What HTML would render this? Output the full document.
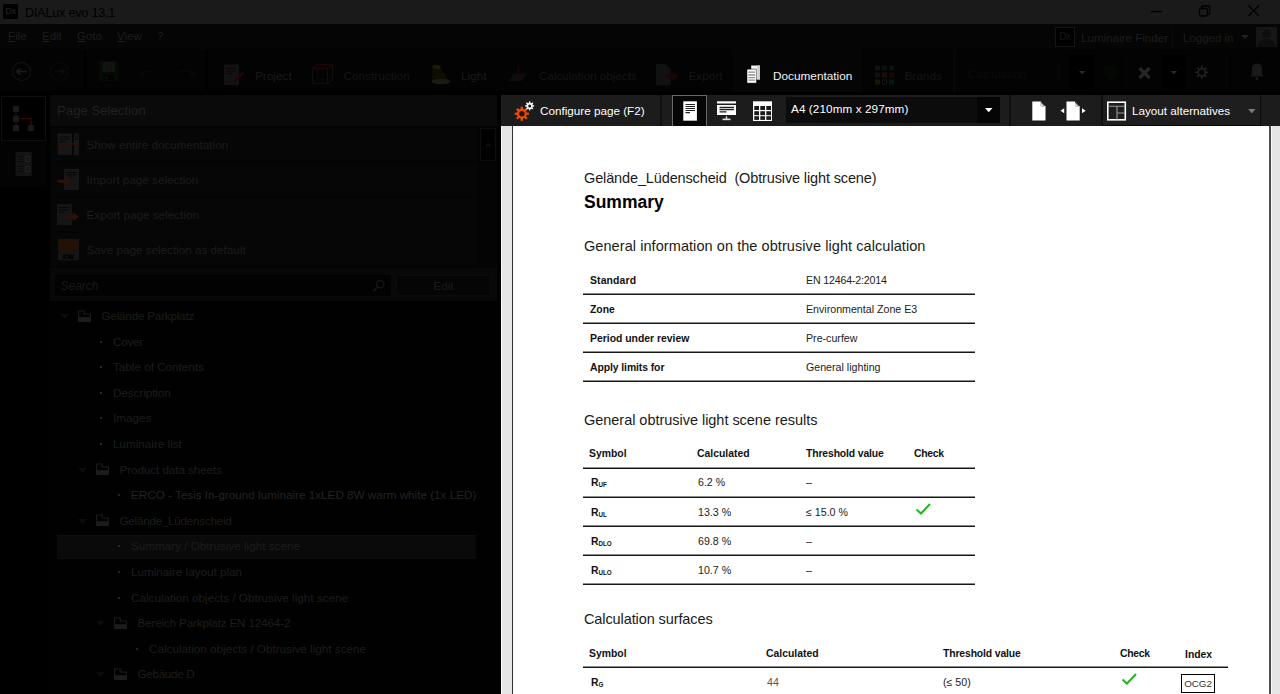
<!DOCTYPE html>
<html lang="en">
<head>
<meta charset="utf-8">
<title>DIALux evo 13.1</title>
<style>
*{box-sizing:border-box;margin:0;padding:0}
html,body{width:1280px;height:694px;overflow:hidden;background:#000}
body{position:relative;font-family:"Liberation Sans","DejaVu Sans",sans-serif;font-size:12px;color:#2b2b2b}
.abs{position:absolute}
.ui{font-family:"Liberation Sans",sans-serif}
/* title bar */
#titlebar{left:0;top:0;width:1280px;height:24px;background:#1a1a1a}
#appicon{left:3px;top:4px;width:15px;height:15px;background:#000;color:#272727;font-size:9px;line-height:15px;text-align:center;letter-spacing:-.3px}
#apptitle{left:25px;top:5px;font-size:12.6px;line-height:16px;color:#000;letter-spacing:-.2px}
/* menu */
#menubar{left:0;top:24px;width:1280px;height:25px;background:#050505}
.menu{top:29px;font-size:11.5px;line-height:15px;color:#1e1e1e}
.menu u{text-decoration:underline;text-underline-offset:1px}
/* toolbar */
#toolbar{left:0;top:49px;width:1280px;height:46px;background:#030303}
.tbl{top:69px;font-size:11.8px;line-height:15px;color:#272727}
/* left */
#left{left:0;top:95px;width:502px;height:599px;background:#000}
#panelhead{left:50px;top:95px;width:447px;height:31px;background:#0a0a0a}
#panelhead span{position:absolute;left:7px;top:7px;font-size:13.2px;line-height:17px;color:#212121}
.act{left:52px;width:425.500px;height:33px;background:#060606;margin-top:2px}
.act span{position:absolute;left:34.500px;top:9px;font-size:11.7px;line-height:15px;color:#1c1c1c;white-space:nowrap}
.tree{font-size:11.7px;line-height:15px;color:#1d1d1d;white-space:nowrap}
/* right toolbar */
#rtool{left:501px;top:95px;width:779px;height:31px;background:#1c1c1c}
.rt{color:#fff;font-size:11.7px;line-height:15px;white-space:nowrap}
/* doc */
#docbg{left:501px;top:126px;width:779px;height:568px;background:#e6e6e6}
#page{left:513px;top:126px;width:756px;height:568px;background:#fff}
.doc{font-family:"Liberation Sans",sans-serif;color:#111;white-space:nowrap}
.h1{font-size:17.5px;line-height:20px;font-weight:bold;color:#000}
.h2{font-size:14.5px;line-height:20px;color:#1a1a1a}
.th{font-size:10.4px;line-height:20px;font-weight:bold;color:#111}
.td{font-size:10.65px;line-height:20px;color:#222}
.th sub{font-size:6.3px;vertical-align:baseline;position:relative;top:1px;letter-spacing:-.1px}
.hr{height:2px;background:linear-gradient(#8c8c8c 0,#8c8c8c 50%,#161616 50%,#161616 100%);left:583px}
</style>
</head>
<body>
<div id="titlebar" class="abs"></div>
<div id="appicon" class="abs">Dx</div>
<div id="apptitle" class="abs ui">DIALux evo 13.1</div>

<div id="menubar" class="abs"></div>
<div class="abs menu ui" style="left:8px"><u>F</u>ile</div>
<div class="abs menu ui" style="left:42px"><u>E</u>dit</div>
<div class="abs menu ui" style="left:77px"><u>G</u>oto</div>
<div class="abs menu ui" style="left:117px"><u>V</u>iew</div>
<div class="abs menu ui" style="left:157px">?</div>

<div id="toolbar" class="abs"></div>


<!-- window controls -->
<svg class="abs" style="left:1140px;top:0" width="140" height="24" viewBox="0 0 140 24">
 <path d="M11 11.5h11" stroke="#000" stroke-width="1.3" fill="none"/>
 <rect x="59.5" y="8.5" width="8" height="7.5" rx="1.5" fill="none" stroke="#000" stroke-width="1.3"/>
 <path d="M61.5 8.5v-1.2a1.3 1.3 0 0 1 1.3-1.3h5.5a1.5 1.5 0 0 1 1.5 1.5v5.5a1.3 1.3 0 0 1-1.3 1.3h-1" fill="none" stroke="#000" stroke-width="1.3"/>
 <path d="M108.5 5.5l10.5 10.5M119 5.5l-10.5 10.5" stroke="#000" stroke-width="1.4" fill="none"/>
</svg>

<!-- menu right -->
<div class="abs" style="left:1055px;top:27px;width:20px;height:20px;background:#000;border:1px solid #151515;color:#161616;font-size:10px;line-height:17px;text-align:center;letter-spacing:-.4px">Dx</div>
<div class="abs menu ui" style="left:1081px;top:29.500px;font-size:11.6px;color:#1d1d1d">Luminaire Finder</div>
<div class="abs" style="left:1172px;top:26px;width:1px;height:22px;background:#0b0b0b"></div>
<div class="abs menu ui" style="left:1183px;top:30.500px;font-size:11.5px;color:#1d1d1d">Logged in</div>
<svg class="abs" style="left:1241px;top:35px" width="8" height="5" viewBox="0 0 8 5"><path d="M0 0h8L4 4.5z" fill="#1f1f1f"/></svg>
<svg class="abs" style="left:1256px;top:27px" width="21" height="20" viewBox="0 0 21 20"><rect width="21" height="20" fill="#161616"/><circle cx="10.5" cy="7" r="4.2" fill="#0e0e0e"/><path d="M2 20c0-5 3-8 8.500-8s8.500 3 8.500 8z" fill="#0e0e0e"/></svg>

<!-- main toolbar -->
<div class="abs" style="left:0;top:91px;width:1280px;height:4px;background:#000"></div>
<div class="abs" style="left:84px;top:49px;width:2px;height:42px;background:#000"></div>
<div class="abs" style="left:206px;top:49px;width:2px;height:42px;background:#000"></div>
<svg class="abs" style="left:0;top:49px" width="220" height="46" viewBox="0 0 220 46">
 <circle cx="21.500" cy="22.500" r="9" fill="none" stroke="#141414" stroke-width="1.2"/>
 <path d="M16.500 22.500h10M16.500 22.500l4-3.200M16.500 22.500l4 3.200" stroke="#1d1d1d" stroke-width="1.500" fill="none"/>
 <circle cx="59.500" cy="22.500" r="9" fill="none" stroke="#0a0a0a" stroke-width="1.2"/>
 <path d="M54.500 22.500h10M64.500 22.500l-4-3.200M64.500 22.500l-4 3.200" stroke="#0c0c0c" stroke-width="1.500" fill="none"/>
 <rect x="99" y="12" width="19.500" height="20" rx="1" fill="#030c03"/>
 <rect x="102.500" y="13" width="12.500" height="10" fill="#131313"/>
 <rect x="106.500" y="13" width="1" height="10" fill="#101010"/><rect x="110.500" y="13" width="1" height="10" fill="#101010"/>
 <rect x="103.500" y="25.500" width="10.500" height="5.500" fill="#020202"/><rect x="105.500" y="27.500" width="2" height="2.500" fill="#0e0e0e"/>
 <path d="M141 25c4-4 9-4 14-2" stroke="#070707" stroke-width="2" fill="none"/><path d="M138 27l3-7 5 6z" fill="#070707"/>
 <path d="M179 23c5-2 10-2 14 2" stroke="#070707" stroke-width="2" fill="none"/><path d="M197 27l-3-7-5 6z" fill="#070707"/>
</svg>

<!-- Project -->
<svg class="abs" style="left:222px;top:62px" width="26" height="26" viewBox="0 0 26 26">
 <rect x="2" y="2.500" width="15" height="20.500" fill="#121212"/>
 <path d="M4.500 6.500h9M4.500 9h9M4.500 11.500h6" stroke="#060606" stroke-width="1.200"/>
 <path d="M12.500 19.500L21.500 10.500" stroke="#200505" stroke-width="2.600"/>
</svg>
<div class="abs tbl ui" style="left:255px;color:#1a1a1a">Project</div>
<!-- Construction -->
<svg class="abs" style="left:310px;top:62px" width="26" height="26" viewBox="0 0 26 26">
 <path d="M2.500 6.500h15v15h-15zM17.500 21.500l5-4v-15" fill="none" stroke="#0f0f0f" stroke-width="1.300"/>
 <path d="M2.500 6.500l5-4h15l-5 4z" fill="none" stroke="#1e0606" stroke-width="1.300"/>
 <path d="M7.500 2.500v15l-5 4M7.500 17.500h15" fill="none" stroke="#080808" stroke-width="1"/>
</svg>
<div class="abs tbl ui" style="left:343.500px;color:#151515">Construction</div>
<!-- Light -->
<svg class="abs" style="left:428px;top:62px" width="26" height="26" viewBox="0 0 26 26">
 <path d="M4.500 5.500c1-3 7-3 8 0l9 13.500H4z" fill="#0d0d03"/>
 <ellipse cx="8.500" cy="5" rx="4.200" ry="2.300" fill="#1b1b04"/>
 <ellipse cx="13" cy="19.500" rx="9.300" ry="2.700" fill="#1a1a12"/>
</svg>
<div class="abs tbl ui" style="left:461px;color:#1a1a1a">Light</div>
<!-- Calculation objects -->
<svg class="abs" style="left:506px;top:62px" width="26" height="26" viewBox="0 0 26 26">
 <path d="M8 11.500h13l-5.500 7.500h-13z" fill="#0d0d0d"/>
 <path d="M12.500 5v11" stroke="#200505" stroke-width="1.600"/>
</svg>
<div class="abs tbl ui" style="left:539px;letter-spacing:-.07px;color:#151515">Calculation objects</div>
<!-- Export -->
<svg class="abs" style="left:654px;top:62px" width="28" height="26" viewBox="0 0 28 26">
 <path d="M2 2h9.500l5.300 5.300v15.900h-14.800z" fill="#111"/>
 <path d="M11.500 12.900h7v-2.400l6.500 4-6.500 4v-2.400h-7z" fill="#200404"/>
</svg>
<div class="abs tbl ui" style="left:688.500px;color:#151515">Export</div>
<!-- Documentation -->
<div class="abs" style="left:733px;top:50px;width:129px;height:42px;background:#050505"></div>
<svg class="abs" style="left:745px;top:64px" width="18" height="20" viewBox="0 0 18 20">
 <path d="M6.200 1.500h8.800v14h-8.800z" fill="#f2f2f2"/>
 <path d="M12.500 1.500h2.500v14h-2.500z" fill="#c9d0d4"/>
 <path d="M2 5.200h9.400v13.900h-9.400z" fill="#fff" stroke="#060606" stroke-width=".5"/>
 <path d="M3.400 8.200h6.600M3.400 11h6.600M3.400 13.700h6.600M3.400 16.200h6.600" stroke="#8a8a8a" stroke-width="1.300"/>
</svg>
<div class="abs tbl ui" style="left:773px;color:#f2f2f2">Documentation</div>
<!-- Brands -->
<svg class="abs" style="left:874px;top:64px" width="22" height="22" viewBox="0 0 22 22">
 <g>
 <rect x="1" y="1.500" width="5" height="5" fill="#14100a"/><rect x="8" y="1.500" width="5" height="5" fill="#08120a"/><rect x="15.500" y="1.500" width="4" height="5" fill="#111"/>
 <rect x="1" y="8.500" width="5" height="5" fill="#111"/><rect x="8" y="8.500" width="5" height="5" fill="#1a0e04"/><rect x="15" y="8.500" width="5" height="5" fill="#1a0805"/>
 <rect x="1" y="15.500" width="5" height="5" fill="#1a1606"/><rect x="8.500" y="16" width="4" height="4" fill="#000" stroke="#141414"/><rect x="15" y="15.500" width="5" height="5" fill="#06141c"/>
 </g>
</svg>
<div class="abs tbl ui" style="left:904.500px;color:#151515">Brands</div>
<div class="abs" style="left:954px;top:50px;width:1px;height:42px;background:#0a0a0a"></div>
<div class="abs tbl ui" style="left:968px;top:67px;color:#0b0b0b">Calculation</div>

<!-- right cluster of main toolbar -->
<div class="abs" style="left:1070px;top:55px;width:24px;height:34px;background:#000"></div>
<div class="abs" style="left:1162px;top:55px;width:23px;height:34px;background:#000"></div>
<svg class="abs" style="left:1040px;top:49px" width="240" height="46" viewBox="0 0 240 46">
 <path d="M9 17h9v4h-9zM9 26h9v4h-9z" fill="#060202"/><rect x="17" y="14" width="3.500" height="18" fill="#050505"/>
 <path d="M39 22h6.500l-3.250 3.300z" fill="#2a2a2a"/>
 <circle cx="70.500" cy="23.500" r="7.500" fill="#030803"/>
 <path d="M99.500 19l10 10M109.500 19l-10 10" stroke="#262626" stroke-width="3.200"/>
 <path d="M130.500 22h6.500l-3.250 3.300z" fill="#2a2a2a"/>
 <g stroke="#232323" stroke-width="1.500" fill="none">
  <circle cx="161.700" cy="23.300" r="3.600"/>
  <path d="M161.700 16.600v2.400M161.700 27.600v2.400M155 23.300h2.400M166 23.300h2.400M157 18.600l1.700 1.700M164.700 26.300l1.700 1.700M157 28l1.700-1.700M164.700 20.300l1.700-1.700"/>
 </g>
 <path d="M217 14.500c-3.500 0-5 2.800-5 5.500v5l-1.500 2.500h13l-1.500-2.500v-5c0-2.700-1.500-5.500-5-5.500z" fill="#1a1a1a"/><circle cx="217" cy="29.500" r="1.500" fill="#1a1a1a"/>
</svg>
<div class="abs" style="left:1126px;top:55px;width:1px;height:34px;background:#070707"></div>
<div class="abs" style="left:1226px;top:55px;width:1px;height:34px;background:#070707"></div>

<div id="left" class="abs"></div>
<div class="abs" style="left:0;top:141px;width:47px;height:46px;background:#030303"></div>
<div class="abs" style="left:1px;top:96px;width:45px;height:45px;background:#000;border:1px solid #0f0f0f"></div>
<svg class="abs" style="left:8px;top:102px" width="32" height="34" viewBox="0 0 32 34">
 <path d="M8 10v13" stroke="#1a1a1a" stroke-width="1.200"/>
 <path d="M11 16.600h12v6.500" stroke="#3c0707" stroke-width="1.400" fill="none"/>
 <g fill="#1a1a1a"><rect x="5" y="4" width="6" height="6"/><rect x="5" y="13.700" width="6" height="6"/><rect x="5" y="23" width="6" height="6"/><rect x="19.800" y="23" width="6" height="6"/></g>
</svg>
<svg class="abs" style="left:15px;top:151px" width="18" height="26" viewBox="0 0 18 26">
 <rect x=".6" y="1" width="16.200" height="24" fill="#141414"/>
 <path d="M2.500 5.500h6M2.500 8h6M2.500 10.500h6M2.500 15.500h6M2.500 18h6M2.500 20.500h6" stroke="#080808" stroke-width="1"/>
 <rect x="10.500" y="5.500" width="4" height="5" fill="none" stroke="#212121" stroke-width="1"/><rect x="10.500" y="15.500" width="4" height="5" fill="none" stroke="#212121" stroke-width="1"/>
</svg>

<div class="abs" style="left:50px;top:126px;width:447px;height:174px;background:#040404"></div>
<div class="abs" style="left:50px;top:268px;width:447px;height:33px;background:#080808"></div>
<div id="panelhead" class="abs ui"><span>Page Selection</span></div>
<div class="abs act ui" style="top:126px"><span>Show entire documentation</span></div>
<div class="abs act ui" style="top:161px"><span>Import page selection</span></div>
<div class="abs act ui" style="top:196px"><span>Export page selection</span></div>
<div class="abs act ui" style="top:231px"><span>Save page selection as default</span></div>
<!-- action icons -->
<svg class="abs" style="left:56px;top:132px" width="26" height="130" viewBox="0 0 26 130">
 <!-- show entire -->
 <rect x="1.700" y="1.500" width="14.300" height="21.500" fill="#171717"/><rect x="18" y="1.500" width="5" height="21.500" fill="#171717"/>
 <path d="M3.500 5h10M3.500 7.300h10M3.500 9.600h6M19 5h3M19 7.300h3" stroke="#080808" stroke-width="1.100"/>
 <rect x="1.700" y="11.200" width="21.300" height="1.700" fill="#2a1206"/>
 <!-- import -->
 <rect x="8" y="36.800" width="15" height="21.200" fill="#161616"/>
 <path d="M10.500 40.500h10M10.500 42.800h10M13 45h4" stroke="#070707" stroke-width="1.100"/>
 <path d="M1.600 47.800h7.500v-3.300l6.200 4.800-6.200 4.800v-3.300h-7.500z" fill="#2c1305"/>
 <!-- export -->
 <rect x="1" y="72" width="15" height="21" fill="#151515"/>
 <path d="M3 75.500h10M3 77.800h10M3 80h5" stroke="#070707" stroke-width="1.100"/>
 <path d="M9.200 83.200h7.500v-3.300l6.300 4.800-6.300 4.800v-3.300h-7.500z" fill="#2c1305"/>
 <!-- save -->
 <path d="M2 107h21v19.500a1.700 1.700 0 0 1-1.700 1.700h-17.600a1.700 1.700 0 0 1-1.700-1.700z" fill="#151515"/>
 <rect x="4" y="107" width="17" height="13" fill="#241004"/>
 <rect x="7" y="122.500" width="11" height="4.500" fill="#050505"/><rect x="9.500" y="123.500" width="2.200" height="3" fill="#151515"/>
</svg>
<!-- scroll up button -->
<div class="abs" style="left:480px;top:128px;width:16px;height:33px;background:#010101;border:1px solid #0e0e0e"></div>
<svg class="abs" style="left:485px;top:142px" width="7" height="5" viewBox="0 0 7 5"><path d="M0 4.500h6.500L3.250.5z" fill="#0e0e0e"/></svg>
<!-- search + edit -->
<div class="abs" style="left:55px;top:275px;width:336px;height:21px;background:#020202"></div>
<div class="abs ui" style="left:60.500px;top:279px;font-size:12px;line-height:15px;font-style:italic;color:#191919">Search</div>
<svg class="abs" style="left:372px;top:279px" width="14" height="14" viewBox="0 0 14 14"><circle cx="8.300" cy="5.200" r="3.600" fill="none" stroke="#161616" stroke-width="1.300"/><path d="M5.700 7.800L1.500 12" stroke="#161616" stroke-width="1.700"/></svg>
<div class="abs ui" style="left:396px;top:275px;width:95px;height:21px;background:#050505;border:1px solid #0b0b0b;color:#1b1b1b;font-size:11.7px;line-height:20px;text-align:center">Edit</div>
<!-- tree -->
<div class="abs" style="left:50px;top:301px;width:447px;height:393px;background:#010101"></div>
<svg class="abs" style="left:60px;top:314.0px" width="9" height="5" viewBox="0 0 9 5"><path d="M0 0h9L4.500 5z" fill="#0c0c0c"/></svg>
<svg class="abs" style="left:78px;top:309.5px" width="13" height="12" viewBox="0 0 13 12"><path d="M.6 1h5.600v3h6.200v7.400h-11.800z" fill="none" stroke="#1c1c1c" stroke-width="1.100"/><rect x=".6" y="7.200" width="11.800" height="4.800" fill="#1c1c1c"/></svg>
<div class="abs tree ui" style="left:101.5px;top:308.0px;letter-spacing:-0.21px">Gelände Parkplatz</div>
<div class="abs" style="left:100px;top:340.6px;width:2px;height:2px;background:#262626"></div>
<div class="abs tree ui" style="left:113px;top:333.6px;letter-spacing:-0.24px">Cover</div>
<div class="abs" style="left:100px;top:366.2px;width:2px;height:2px;background:#262626"></div>
<div class="abs tree ui" style="left:113px;top:359.2px">Table of Contents</div>
<div class="abs" style="left:100px;top:391.8px;width:2px;height:2px;background:#262626"></div>
<div class="abs tree ui" style="left:113px;top:384.8px;letter-spacing:-0.07px">Description</div>
<div class="abs" style="left:100px;top:417.4px;width:2px;height:2px;background:#262626"></div>
<div class="abs tree ui" style="left:113px;top:410.4px">Images</div>
<div class="abs" style="left:100px;top:443.0px;width:2px;height:2px;background:#262626"></div>
<div class="abs tree ui" style="left:113px;top:436.0px">Luminaire list</div>
<svg class="abs" style="left:78px;top:467.6px" width="9" height="5" viewBox="0 0 9 5"><path d="M0 0h9L4.500 5z" fill="#0c0c0c"/></svg>
<svg class="abs" style="left:96px;top:463.1px" width="13" height="12" viewBox="0 0 13 12"><path d="M.6 1h5.600v3h6.200v7.400h-11.800z" fill="none" stroke="#1c1c1c" stroke-width="1.100"/><rect x=".6" y="7.200" width="11.800" height="4.800" fill="#1c1c1c"/></svg>
<div class="abs tree ui" style="left:119.5px;top:461.6px;letter-spacing:-0.08px">Product data sheets</div>
<div class="abs" style="left:118px;top:494.2px;width:2px;height:2px;background:#262626"></div>
<div class="abs tree ui" style="left:131px;top:487.2px;color:#232323">ERCO - Tesis In-ground luminaire 1xLED 8W warm white (1x LED)</div>
<svg class="abs" style="left:78px;top:518.8px" width="9" height="5" viewBox="0 0 9 5"><path d="M0 0h9L4.500 5z" fill="#0c0c0c"/></svg>
<svg class="abs" style="left:96px;top:514.3px" width="13" height="12" viewBox="0 0 13 12"><path d="M.6 1h5.600v3h6.200v7.400h-11.800z" fill="none" stroke="#1c1c1c" stroke-width="1.100"/><rect x=".6" y="7.200" width="11.800" height="4.800" fill="#1c1c1c"/></svg>
<div class="abs tree ui" style="left:119.5px;top:512.8px;letter-spacing:-0.26px">Gelände_Lüdenscheid</div>
<div class="abs" style="left:57px;top:534.9px;width:419px;height:24px;background:#0a0a0a;border-top:1px dotted #141414;border-bottom:1px dotted #0e0e0e"></div>
<div class="abs" style="left:118px;top:545.4px;width:2px;height:2px;background:#262626"></div>
<div class="abs tree ui" style="left:131px;top:538.4px">Summary / Obtrusive light scene</div>
<div class="abs" style="left:118px;top:571.0px;width:2px;height:2px;background:#262626"></div>
<div class="abs tree ui" style="left:131px;top:564.0px">Luminaire layout plan</div>
<div class="abs" style="left:118px;top:596.6px;width:2px;height:2px;background:#262626"></div>
<div class="abs tree ui" style="left:131px;top:589.6px">Calculation objects / Obtrusive light scene</div>
<svg class="abs" style="left:96px;top:621.2px" width="9" height="5" viewBox="0 0 9 5"><path d="M0 0h9L4.500 5z" fill="#0c0c0c"/></svg>
<svg class="abs" style="left:114px;top:616.7px" width="13" height="12" viewBox="0 0 13 12"><path d="M.6 1h5.600v3h6.200v7.400h-11.800z" fill="none" stroke="#1c1c1c" stroke-width="1.100"/><rect x=".6" y="7.200" width="11.800" height="4.800" fill="#1c1c1c"/></svg>
<div class="abs tree ui" style="left:137.5px;top:615.2px;letter-spacing:-0.16px">Bereich Parkplatz EN 12464-2</div>
<div class="abs" style="left:136px;top:647.8px;width:2px;height:2px;background:#262626"></div>
<div class="abs tree ui" style="left:149px;top:640.8px">Calculation objects / Obtrusive light scene</div>
<svg class="abs" style="left:96px;top:672.4px" width="9" height="5" viewBox="0 0 9 5"><path d="M0 0h9L4.500 5z" fill="#0c0c0c"/></svg>
<svg class="abs" style="left:114px;top:667.9px" width="13" height="12" viewBox="0 0 13 12"><path d="M.6 1h5.600v3h6.200v7.400h-11.800z" fill="none" stroke="#1c1c1c" stroke-width="1.100"/><rect x=".6" y="7.200" width="11.800" height="4.800" fill="#1c1c1c"/></svg>
<div class="abs tree ui" style="left:137.5px;top:666.4px;letter-spacing:-0.31px">Gebäude D</div>

<div id="rtool" class="abs"></div>
<div id="docbg" class="abs"></div>
<div id="page" class="abs"></div>


<!-- right toolbar content -->
<div class="abs" style="left:1103px;top:95px;width:157px;height:30px;background:#1e1e1e"></div>
<svg class="abs" style="left:512px;top:98px" width="26" height="26" viewBox="0 0 26 26">
 <g transform="translate(9.850 15.750)" fill="#f04a06">
  <path d="M0-4.900a4.900 4.900 0 1 0 0 9.800a4.900 4.900 0 1 0 0-9.800zM0-2.750a2.750 2.750 0 1 1 0 5.500a2.750 2.750 0 1 1 0-5.500z" fill-rule="evenodd"/>
  <g id="t1"><rect x="-1.150" y="-7.050" width="2.300" height="3"/><rect x="-1.150" y="4.050" width="2.300" height="3"/></g>
  <use href="#t1" transform="rotate(45)"/><use href="#t1" transform="rotate(90)"/><use href="#t1" transform="rotate(135)"/>
 </g>
 <g transform="translate(17.650 7.900)" fill="#fafafa">
  <path d="M0-3.100a3.100 3.100 0 1 0 0 6.200a3.100 3.100 0 1 0 0-6.200zM0-1.500a1.500 1.500 0 1 1 0 3a1.500 1.500 0 1 1 0-3z" fill-rule="evenodd"/>
  <g id="t2"><rect x="-.7" y="-4.500" width="1.400" height="2"/><rect x="-.7" y="2.500" width="1.400" height="2"/></g>
  <use href="#t2" transform="rotate(45)"/><use href="#t2" transform="rotate(90)"/><use href="#t2" transform="rotate(135)"/>
 </g>
</svg>
<div class="abs rt ui" style="left:540px;top:103px">Configure page (F2)</div>
<div class="abs" style="left:660px;top:95px;width:2px;height:31px;background:#101010"></div>
<div class="abs" style="left:672px;top:95px;width:35px;height:31px;background:#060606;border:1px solid #6a6a6a;border-bottom:0"></div>
<svg class="abs" style="left:680px;top:98px" width="100" height="26" viewBox="0 0 100 26">
 <!-- portrait page -->
 <rect x="3.300" y="3.300" width="13.600" height="19.400" fill="#fff"/>
 <path d="M5.500 6.500h9.500M5.500 8.500h9.500M5.500 10.500h9.500M5.500 12.500h9.500M5.500 14.700h4.500" stroke="#222" stroke-width="1.200"/>
 <!-- presentation -->
 <rect x="37" y="3.300" width="19" height="2.200" fill="#fff"/>
 <rect x="37" y="7" width="19" height="10" fill="#fff"/>
 <path d="M39.500 9.500h14.500M39.500 11.700h14.500M39.500 13.900h7" stroke="#222" stroke-width="1.300"/>
 <rect x="45.800" y="18.300" width="1.400" height="3" fill="#ddd"/><rect x="42.500" y="20.600" width="8" height="1.600" fill="#ddd"/>
 <!-- table -->
 <rect x="73" y="3.300" width="19" height="19.700" fill="#fff"/>
 <g fill="#1a1a1a"><rect x="74.300" y="8" width="4.700" height="4"/><rect x="80.300" y="8" width="4.700" height="4"/><rect x="86.300" y="8" width="4.700" height="4"/>
 <rect x="74.300" y="13.200" width="4.700" height="4"/><rect x="80.300" y="13.200" width="4.700" height="4"/><rect x="86.300" y="13.200" width="4.700" height="4"/>
 <rect x="74.300" y="18.200" width="4.700" height="3.700"/><rect x="80.300" y="18.200" width="4.700" height="3.700"/><rect x="86.300" y="18.200" width="4.700" height="3.700"/></g>
</svg>
<div class="abs" style="left:786px;top:97px;width:191px;height:26px;background:#0c0c0c"></div>
<div class="abs" style="left:977px;top:97px;width:23px;height:26px;background:#050505"></div>
<div class="abs rt ui" style="left:791px;top:101px;letter-spacing:.1px">A4 (210mm x 297mm)</div>
<svg class="abs" style="left:985px;top:108px" width="8" height="5" viewBox="0 0 8 5"><path d="M0 0h7.500L3.750 4.200z" fill="#fff"/></svg>
<div class="abs" style="left:1009px;top:95px;width:2px;height:31px;background:#101010"></div>
<svg class="abs" style="left:1028px;top:98px" width="64" height="26" viewBox="0 0 64 26">
 <path d="M4.300 3.500h8.500l4.700 4.700v14.300h-13.200z" fill="#fff"/>
 <path d="M12.800 3.500l4.700 4.700h-4.700z" fill="#1c1c1c"/><path d="M12.800 4.500v3.700h3.700z" fill="#d8d8d8"/>
 <path d="M38.500 3.500h8.500l4.700 4.700v14.300h-13.200z" fill="#fff"/>
 <path d="M47 3.500l4.700 4.700h-4.700z" fill="#1c1c1c"/><path d="M47 4.500v3.700h3.700z" fill="#d8d8d8"/>
 <path d="M36.200 10.300v5l-3.700-2.500zM54 10.300v5l3.700-2.500z" fill="#fff"/>
</svg>
<div class="abs" style="left:1101px;top:95px;width:2px;height:31px;background:#101010"></div>
<svg class="abs" style="left:1105px;top:98px" width="24" height="26" viewBox="0 0 24 26">
 <rect x="2.800" y="4.200" width="17.500" height="17.600" fill="none" stroke="#fff" stroke-width="1.600"/>
 <path d="M3 8.300h17M12 8.300v13.500M12 15h8" stroke="#9a9a9a" stroke-width="1.100" fill="none"/>
</svg>
<div class="abs rt ui" style="left:1132px;top:103px">Layout alternatives</div>
<svg class="abs" style="left:1248px;top:109px" width="8" height="5" viewBox="0 0 8 5"><path d="M0 0h7.500L3.750 4.200z" fill="#7a7a7a"/></svg>
<div class="abs" style="left:1260px;top:95px;width:1px;height:31px;background:#0c0c0c"></div>
<div class="abs" style="left:1102px;top:125px;width:158px;height:1px;background:#080808"></div>
<!-- doc frame edges -->
<div class="abs" style="left:512px;top:126px;width:1px;height:568px;background:#303030"></div>
<div class="abs" style="left:1269px;top:126px;width:2px;height:568px;background:#4c4c4c"></div>
<div class="abs" style="left:1271px;top:126px;width:1px;height:568px;background:#fafafa"></div>
<div class="abs" style="left:501px;top:126px;width:1px;height:568px;background:#fafafa"></div>

<!-- document -->
<div class="abs doc h2" style="left:584px;top:168px;letter-spacing:-0.132px">Gelände_Lüdenscheid&nbsp; (Obtrusive light scene)</div>
<div class="abs doc h1" style="left:584px;top:192px">Summary</div>
<div class="abs doc h2" style="left:584px;top:236px;letter-spacing:0.07px">General information on the obtrusive light calculation</div>

<div class="abs doc th" style="left:590px;top:271px;letter-spacing:0.15px">Standard</div>
<div class="abs doc td" style="left:806px;top:270px;letter-spacing:-0.18px">EN 12464-2:2014</div>
<div class="abs hr" style="top:293px;width:392px"></div>
<div class="abs doc th" style="left:590px;top:300px">Zone</div>
<div class="abs doc td" style="left:806px;top:299px">Environmental Zone E3</div>
<div class="abs hr" style="top:322px;width:392px"></div>
<div class="abs doc th" style="left:590px;top:329px">Period under review</div>
<div class="abs doc td" style="left:806px;top:328px">Pre-curfew</div>
<div class="abs hr" style="top:351px;width:392px"></div>
<div class="abs doc th" style="left:590px;top:358px;letter-spacing:-0.08px">Apply limits for</div>
<div class="abs doc td" style="left:806px;top:357px">General lighting</div>
<div class="abs hr" style="top:380px;width:392px"></div>

<div class="abs doc h2" style="left:584px;top:410px;letter-spacing:-0.03px">General obtrusive light scene results</div>
<div class="abs doc th" style="left:589px;top:444px">Symbol</div>
<div class="abs doc th" style="left:697px;top:444px">Calculated</div>
<div class="abs doc th" style="left:806px;top:444px;letter-spacing:-0.13px">Threshold value</div>
<div class="abs doc th" style="left:914px;top:444px;letter-spacing:-0.3px">Check</div>
<div class="abs hr" style="top:467px;width:392px"></div>
<div class="abs doc th" style="left:591px;top:473px">R<sub>UF</sub></div>
<div class="abs doc td" style="left:698px;top:472px">6.2 %</div>
<div class="abs doc td" style="left:806px;top:472px">–</div>
<div class="abs hr" style="top:496px;width:392px"></div>
<div class="abs doc th" style="left:591px;top:503px">R<sub>UL</sub></div>
<div class="abs doc td" style="left:698px;top:502px">13.3 %</div>
<div class="abs doc td" style="left:806px;top:502px">≤ 15.0 %</div>
<svg class="abs" style="left:915px;top:502px" width="18" height="14" viewBox="0 0 18 14"><path d="M1.5 7.5 L6 11.5 L15 2" fill="none" stroke="#20b620" stroke-width="2"/></svg>
<div class="abs hr" style="top:525px;width:392px"></div>
<div class="abs doc th" style="left:591px;top:532px">R<sub>DLO</sub></div>
<div class="abs doc td" style="left:698px;top:531px">69.8 %</div>
<div class="abs doc td" style="left:806px;top:531px">–</div>
<div class="abs hr" style="top:554px;width:392px"></div>
<div class="abs doc th" style="left:591px;top:561px">R<sub>ULO</sub></div>
<div class="abs doc td" style="left:698px;top:560px">10.7 %</div>
<div class="abs doc td" style="left:806px;top:560px">–</div>
<div class="abs hr" style="top:583px;width:392px"></div>

<div class="abs doc h2" style="left:584px;top:609px;letter-spacing:-0.1px">Calculation surfaces</div>
<div class="abs doc th" style="left:589px;top:644px">Symbol</div>
<div class="abs doc th" style="left:766px;top:644px">Calculated</div>
<div class="abs doc th" style="left:943px;top:644px;letter-spacing:-0.13px">Threshold value</div>
<div class="abs doc th" style="left:1120px;top:644px;letter-spacing:-0.3px">Check</div>
<div class="abs doc th" style="left:1185px;top:645px">Index</div>
<div class="abs hr" style="top:666px;width:645px"></div>
<div class="abs doc th" style="left:591px;top:673px">R<sub>G</sub></div>
<div class="abs doc td" style="left:767px;top:672px;color:#555">44</div>
<div class="abs doc td" style="left:943px;top:672px">(≤ 50)</div>
<svg class="abs" style="left:1121px;top:672px" width="18" height="14" viewBox="0 0 18 14"><path d="M1.5 7.5 L6 11.5 L15 2" fill="none" stroke="#20b620" stroke-width="2"/></svg>
<div class="abs doc td" style="left:1181px;top:674px;width:34px;height:19px;border:1px solid #000;text-align:center;line-height:17px;font-size:9.9px;color:#333;letter-spacing:-.1px">OCG2</div>
</body>
</html>
